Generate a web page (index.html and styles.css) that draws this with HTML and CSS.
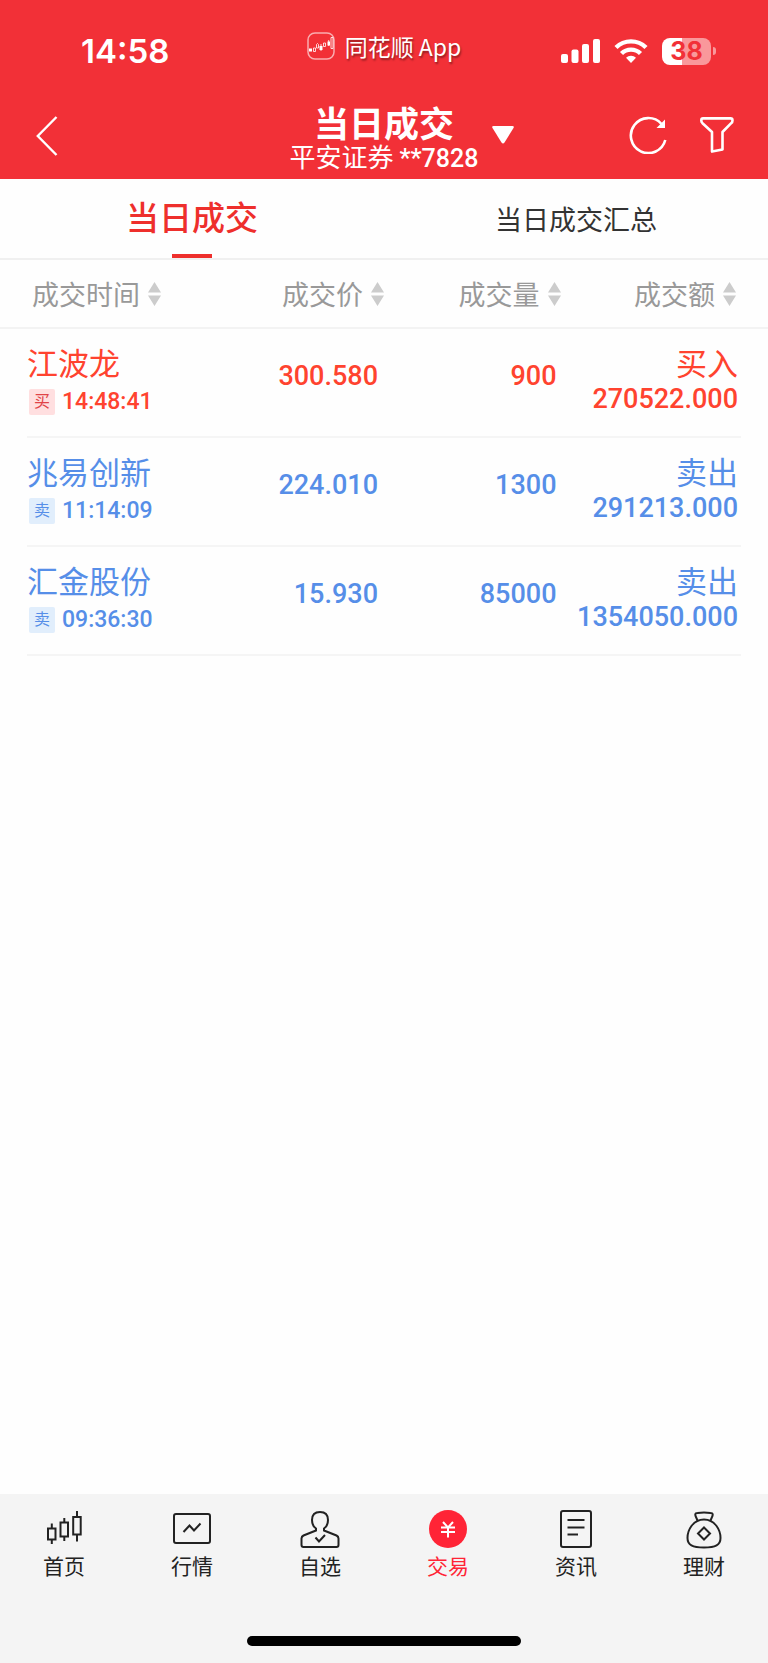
FILE: index.html
```html
<!DOCTYPE html>
<html lang="zh-CN">
  <head>
    <meta charset="UTF-8" />
    <meta name="viewport" content="width=device-width, initial-scale=1.0" />
    <title>当日成交</title>
    <link rel="stylesheet" href="styles.css">
  </head>
  <body>
    <header class="header">
      <div class="status-bar">
        <span class="clock">14:58</span>
        <div class="app-label">
          <svg width="28" height="28" viewBox="0 0 28 28" fill="none" stroke="#fff">
            <rect x="1" y="1" width="26" height="26" rx="7" stroke-width="1.500" opacity=".6" />
            <path d="M2 16.500h3v3H2zM12.500 14h3v4h-3zM20.500 9.500h2.500v4h-2.500z" fill="#fff" stroke="none" />
            <path d="M6.500 16h2v3.500h-2zM9.500 12.500l1-1 1 1v3.500h-2zM16.500 11h2v3.500h-2zM24 5.500h2v11h-2zM14 12v7M21.700 8v6" stroke-width=".8" />
          </svg>
          <span>同花顺 App</span>
        </div>
        <div class="status-icons">
          <svg width="39" height="25" viewBox="0 0 39 25" fill="#fff">
            <rect x="0" y="15" width="7" height="9" rx="2" />
            <rect x="10.500" y="10.500" width="7" height="13.500" rx="2" />
            <rect x="21" y="5" width="7" height="19" rx="2" />
            <rect x="32" y="0" width="7" height="24" rx="2" />
          </svg>
          <svg width="34" height="25" viewBox="0 0 34 25" fill="none" stroke="#fff" stroke-width="4.400">
            <path d="M2 8.500A21.500 21.500 0 0 1 32 8.500" />
            <path d="M7.500 14.500A13.500 13.500 0 0 1 26.500 14.500" />
            <path d="M17 24l-5-5.200a7.200 7.200 0 0 1 10 0z" fill="#fff" stroke="none" />
          </svg>
          <div class="battery"><span>38</span></div>
        </div>
      </div>

      <div class="nav-bar">
        <button class="back-btn" aria-label="返回">
          <svg width="22" height="40" viewBox="0 0 22 40" fill="none" stroke="#fff" stroke-width="2.400">
            <path d="M20.500 1L1.800 20L20.500 39" />
          </svg>
        </button>
        <div class="title">
          <h1>当日成交</h1>
          <p>平安证券 <span class="account">**7828</span></p>
        </div>
        <div class="nav-right">
          <button aria-label="切换账户">
            <svg width="22" height="18" viewBox="0 0 22 18" fill="#fff">
              <path d="M1.500 0h19q2 0 1 2l-9 14.500q-1.500 2-3 0L.5 2q-1-2 1-2z" />
            </svg>
          </button>
          <div class="actions">
            <button aria-label="刷新">
              <svg width="38" height="38" viewBox="0 0 38 38" fill="none" stroke="#fff" stroke-width="2.600">
                <path d="M36.300 24A17.500 17.500 0 1 1 32.500 8" />
                <path d="M36 3.500v8.500H27.500z" fill="#fff" stroke="none" />
              </svg>
            </button>
            <button aria-label="筛选">
              <svg width="34" height="36" viewBox="0 0 34 36" fill="none" stroke="#fff" stroke-width="2.600" stroke-linejoin="round">
                <path d="M3 1.400h27.500q2 0 2 2q0 1.800-1.300 2.800L22.500 15v17.500L12 34.600V15L2.500 6.200Q1.300 5 1.300 3.400q0-2 1.700-2z" />
              </svg>
            </button>
          </div>
        </div>
      </div>
    </header>

    <nav class="tabs">
      <a href="#today" class="tab active">当日成交</a>
      <a href="#summary" class="tab">当日成交汇总</a>
    </nav>

    <main>
      <table class="deals">
        <thead>
          <tr>
            <th><button class="sort-btn">成交时间<svg class="sort" viewBox="0 0 13 24"><path d="M6.500 0L13 10.500H0zM0 13.500h13L6.500 24z" /></svg></button></th>
            <th><button class="sort-btn">成交价<svg class="sort" viewBox="0 0 13 24"><path d="M6.500 0L13 10.500H0zM0 13.500h13L6.500 24z" /></svg></button></th>
            <th><button class="sort-btn">成交量<svg class="sort" viewBox="0 0 13 24"><path d="M6.500 0L13 10.500H0zM0 13.500h13L6.500 24z" /></svg></button></th>
            <th><button class="sort-btn">成交额<svg class="sort" viewBox="0 0 13 24"><path d="M6.500 0L13 10.500H0zM0 13.500h13L6.500 24z" /></svg></button></th>
          </tr>
        </thead>
        <tbody>
          <tr class="buy">
            <td>
              <div class="name">江波龙</div>
              <div class="time"><span class="tag">买</span>14:48:41</div>
            </td>
            <td class="number">300.580</td>
            <td class="number">900</td>
            <td>
              <div class="name">买入</div>
              <div class="amount">270522.000</div>
            </td>
          </tr>
          <tr class="sell">
            <td>
              <div class="name">兆易创新</div>
              <div class="time"><span class="tag">卖</span>11:14:09</div>
            </td>
            <td class="number">224.010</td>
            <td class="number">1300</td>
            <td>
              <div class="name">卖出</div>
              <div class="amount">291213.000</div>
            </td>
          </tr>
          <tr class="sell">
            <td>
              <div class="name">汇金股份</div>
              <div class="time"><span class="tag">卖</span>09:36:30</div>
            </td>
            <td class="number">15.930</td>
            <td class="number">85000</td>
            <td>
              <div class="name">卖出</div>
              <div class="amount">1354050.000</div>
            </td>
          </tr>
        </tbody>
      </table>
    </main>

    <footer class="bottom">
      <nav class="bottom-nav">
        <a href="#home">
          <svg viewBox="0 0 40 40">
            <path d="M4 18.500h7.500v11H4zM7.800 13.500v5M7.800 29.500v4.500M16.500 12.500H24v14h-7.500zM20.300 8v4.500M20.300 26.500v4.500M29.200 7h7.500v17.500h-7.500zM33 1v6M33 24.500v7" />
          </svg>
          首页
        </a>
        <a href="#market">
          <svg viewBox="0 0 40 40">
            <rect x="2" y="4" width="36" height="29" rx="2" />
            <path d="M11.500 22l6-6.500 4.500 5 6.500-7" />
          </svg>
          行情
        </a>
        <a href="#watchlist">
          <svg viewBox="0 0 40 40">
            <path d="M16 18.500Q12 16 12 10q0-8 8-8t8 8q0 6-4 8.500v2l12.500 5q2 1 2 3V35q0 2-2 2h-33q-2 0-2-2v-6.500q0-2 2-3l12.500-5z" />
            <path d="M15.500 27.500l3.500 4 6-6.500" />
          </svg>
          自选
        </a>
        <a href="#trade" class="active">
          <svg viewBox="0 0 40 40">
            <circle cx="20" cy="19" r="19" fill="#ff2436" stroke="none" />
            <path d="M15 12l5 5.500 5-5.500M13 17.500h14M13 22h14M20 17v10.500" stroke="#fff" />
          </svg>
          交易
        </a>
        <a href="#news">
          <svg viewBox="0 0 40 40">
            <rect x="5" y="1" width="30" height="36" rx="2" />
            <path d="M11.500 10h17M11.500 17.500h17M11.500 24.500h10.500" />
          </svg>
          资讯
        </a>
        <a href="#wealth">
          <svg viewBox="0 0 40 40">
            <path d="M13.500 10.500L11.500 6q-1-3 2-3 6.500-1 13 0 3 0 2 3l-2 4.500" />
            <path d="M20 9.500C9 9.500 3.500 20 3.500 28c0 7 5 9.500 16.500 9.500s16.500-2.500 16.500-9.500C36.500 20 31 9.500 20 9.500z" />
            <path d="M20 17.500l6 6-6 6-6-6z" />
          </svg>
          理财
        </a>
      </nav>
      <div class="home-indicator"></div>
    </footer>
  </body>
</html>
```

FILE: styles.css
```css
* {
    box-sizing: border-box;
}

body {
    font-family: "Noto Sans CJK SC", sans-serif;
    background-color: #fefefe;
    margin: 0;
    min-height: 100vh;
    display: flex;
    flex-direction: column;
    color: #333;
}

button {
    font: inherit;
    color: inherit;
    background: none;
    border: none;
    padding: 0;
    cursor: pointer;
}

a {
    color: inherit;
    text-decoration: none;
}

svg {
    display: block;
}

/* Red header */
.header {
    background-color: #f23037;
    color: white;
}

.status-bar {
    display: grid;
    grid-template-columns: 1fr auto 1fr;
    align-items: center;
    height: 102px;
    padding: 0 52px 0 81px;
}

.clock {
    font-family: Inter, sans-serif;
    font-size: 33px;
    font-weight: 600;
}

.app-label {
    display: flex;
    align-items: center;
    gap: 10px;
    padding-bottom: 10px;
    margin-right: 29px;
    font-size: 23px;
    line-height: 26px;
    text-shadow: 1px 2px 2px rgba(0, 0, 0, 0.4);
}

.status-icons {
    display: flex;
    align-items: center;
    justify-content: flex-end;
    gap: 14px;
}

.battery {
    display: flex;
    align-items: center;
}

.battery span {
    width: 49px;
    border-radius: 8px;
    background: linear-gradient(to right, white 40%, #f9989b 40%);
    color: #f23037;
    font-family: Inter, sans-serif;
    font-size: 25px;
    font-weight: 700;
    line-height: 27px;
    text-align: center;
}

.battery::after {
    content: "";
    width: 3px;
    height: 8px;
    margin-left: 2px;
    border-radius: 0 3px 3px 0;
    background-color: #f9989b;
}

.nav-bar {
    display: grid;
    grid-template-columns: 1fr auto 1fr;
    height: 77px;
    padding: 0 34px;
}

.back-btn {
    justify-self: start;
    align-self: start;
    margin: 14px 0 0 2px;
}

.title {
    text-align: center;
}

.title h1 {
    margin: 0;
    font-size: 35px;
    font-weight: 700;
    line-height: 39px;
}

.title p {
    margin: 0;
    font-size: 26px;
    line-height: 30px;
}

.account {
    font-family: Roboto, sans-serif;
    font-size: 25px;
    font-weight: 500;
}

.nav-right {
    display: flex;
    align-items: center;
    padding: 0 0 11px 14px;
}

.actions {
    display: flex;
    align-items: center;
    gap: 33px;
    margin-left: auto;
}

/* Tabs */
.tabs {
    display: grid;
    grid-template-columns: 1fr 1fr;
    border-bottom: 2px solid #f0f0f0;
}

.tab {
    display: flex;
    flex-direction: column;
    align-items: center;
    font-size: 27px;
    line-height: 79px;
}

.tab.active {
    color: #ee2f2c;
    font-size: 33px;
    font-weight: 500;
    line-height: 75px;
}

.tab.active::after {
    content: "";
    width: 40px;
    height: 4px;
    background-color: #ee2f2c;
}

/* Deals table */
main {
    flex: 1;
}

.deals,
.deals thead,
.deals tbody {
    display: block;
}

.deals tr {
    display: grid;
    grid-template-columns: repeat(4, 1fr);
}

.deals thead tr {
    padding: 0 27px;
    border-bottom: 2px solid #f3f3f3;
}

.deals tbody tr {
    height: 109px;
    margin: 0 27px;
    border-bottom: 2px solid #f5f5f5;
}

.deals th,
.deals td {
    padding: 0;
    text-align: right;
    white-space: nowrap;
}

.deals th:first-child,
.deals td:first-child {
    text-align: left;
}

.deals th {
    font-size: 27px;
    font-weight: 400;
    color: #999;
}

.deals th:first-child {
    padding-left: 5px;
}

.deals th:nth-child(3) {
    padding-right: 2px;
}

.deals th:last-child {
    padding-right: 5px;
}

.sort-btn {
    display: inline-flex;
    align-items: center;
    gap: 8px;
    height: 67px;
}

.sort {
    width: 13px;
    height: 24px;
    fill: #ccc;
}

.deals td {
    padding: 14px 3px 0 0;
}

.buy {
    color: #ff432f;
}

.sell {
    color: #568ee8;
}

.name {
    font-size: 31px;
    line-height: 38px;
}

.number,
.amount,
.time {
    font-family: Roboto, "Noto Sans CJK SC", sans-serif;
    font-size: 27px;
    font-weight: 500;
    line-height: 36px;
}

.deals .number {
    padding: 29px 6px 0 0;
}

.time {
    display: flex;
    align-items: center;
    gap: 7px;
    padding: 3px 0 0 2px;
    font-size: 23px;
}

.tag {
    width: 26px;
    border-radius: 2px;
    background-color: #e1eefc;
    font-size: 16px;
    font-weight: 400;
    line-height: 26px;
    text-align: center;
}

.buy .tag {
    background-color: #ffdfe0;
    color: #e04448;
}

/* Bottom navigation */
.bottom {
    background-color: #f4f4f4;
    padding: 16px 0 17px;
}

.bottom-nav {
    display: grid;
    grid-template-columns: repeat(6, 1fr);
    margin-bottom: 56px;
}

.bottom-nav a {
    display: flex;
    flex-direction: column;
    align-items: center;
    font-size: 21px;
    line-height: 30px;
    color: #222;
}

.bottom-nav svg {
    width: 40px;
    height: 40px;
    fill: none;
    stroke: #222;
    stroke-width: 2;
}

.bottom-nav .active {
    color: #ff2436;
}

.home-indicator {
    width: 274px;
    height: 10px;
    margin: 0 auto;
    border-radius: 5px;
    background-color: black;
}
```
